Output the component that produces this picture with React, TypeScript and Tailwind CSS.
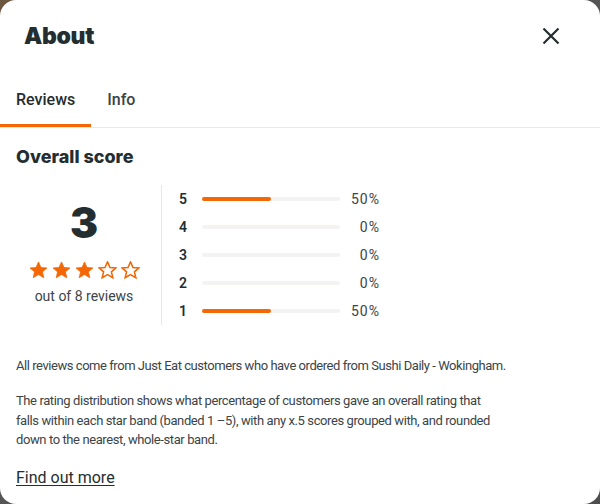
const rows = [
  { star: 5, pct: 50 },
  { star: 4, pct: 0 },
  { star: 3, pct: 0 },
  { star: 2, pct: 0 },
  { star: 1, pct: 50 },
];

function Star({ filled }: { filled: boolean }) {
  return (
    <svg width="19" height="18" viewBox="0 0 24 23" className="shrink-0">
      <path
        d="M12 1.2l3.2 7.1 7.6.6-5.8 5 1.8 7.5L12 17.4l-6.8 4 1.8-7.5-5.8-5 7.6-.6z"
        fill={filled ? "#f36805" : "none"}
        stroke="#f36805"
        strokeWidth={filled ? 1 : 2}
        strokeLinejoin="miter"
      />
    </svg>
  );
}

export default function App() {
  return (
    <div className="h-[504px] w-[600px] bg-gradient-to-br from-[#6d5841] via-[#555] to-[#4d4d4d]">
      <div
        className="flex h-[504px] w-[600px] flex-col overflow-hidden rounded-[16px] bg-white text-[#242e30]"
        style={{ fontFamily: "Roboto, 'Noto Sans', sans-serif" }}
      >
        <div className="flex h-[72px] items-center justify-between pl-6 pr-[40px]">
          <h1
            className="text-[23px] font-black leading-none tracking-[-0.3px]"
            style={{ fontFamily: "Inter, sans-serif" }}
          >
            About
          </h1>
          <svg width="18" height="18" viewBox="0 0 18 18">
            <path d="M1.5 1.5l15 15M16.5 1.5l-15 15" stroke="#242e30" strokeWidth="2.2" />
          </svg>
        </div>

        <div className="flex h-[56px] border-b border-[#e8e8e8]">
          <div className="flex items-center border-b-[3px] border-[#f36805] px-4 pt-[3px] text-[16px] font-medium">
            Reviews
          </div>
          <div className="flex items-center px-4 text-[16px] font-medium text-[#3c4447]">Info</div>
        </div>

        <div className="px-4">
          <h2
            className="mt-[17px] text-[18px] font-extrabold leading-6"
            style={{ fontFamily: "Inter, sans-serif" }}
          >
            Overall score
          </h2>

          <div className="mt-[16px] flex">
            <div className="flex w-[136px] flex-col items-center pt-[17px]">
              <div
                className="text-[42px] font-black leading-[42px]"
                style={{ fontFamily: "Inter, sans-serif" }}
              >
                3
              </div>
              <div className="mt-[17px] flex gap-[4px]">
                {[1, 2, 3, 4, 5].map((i) => (
                  <Star key={i} filled={i <= 3} />
                ))}
              </div>
              <div className="mt-[7px] text-[14px] leading-5 text-[#3c4447]">out of 8 reviews</div>
            </div>

            <div className="ml-[9px] border-l border-[#e6e6e6] pl-[17px]">
              {rows.map((r) => (
                <div key={r.star} className="flex h-[28px] items-center">
                  <span className="w-[23px] text-[14px] font-semibold">{r.star}</span>
                  <div className="h-[4px] w-[138px] rounded-full bg-[#f5f3f1]">
                    <div
                      className="h-[4px] rounded-full bg-[#f36805]"
                      style={{ width: `${r.pct}%` }}
                    />
                  </div>
                  <span className="w-[40px] text-right text-[14px] tracking-[1px] text-[#3c4447]">
                    {r.pct}%
                  </span>
                </div>
              ))}
            </div>
          </div>

          <p className="mt-[31px] text-[13px] leading-5 tracking-[-0.45px] text-[#3c4447]">
            All reviews come from Just Eat customers who have ordered from Sushi Daily - Wokingham.
          </p>
          <p className="mt-[15px] text-[13px] leading-[19.5px] tracking-[-0.4px] text-[#3c4447]">
            The rating distribution shows what percentage of customers gave an overall rating that
            <br />
            falls within each star band (banded 1 –5), with any x.5 scores grouped with, and rounded
            <br />
            down to the nearest, whole-star band.
          </p>
          <a className="mt-[16px] inline-block text-[16px] text-[#242e30] underline underline-offset-2">
            Find out more
          </a>
        </div>
      </div>
    </div>
  );
}
